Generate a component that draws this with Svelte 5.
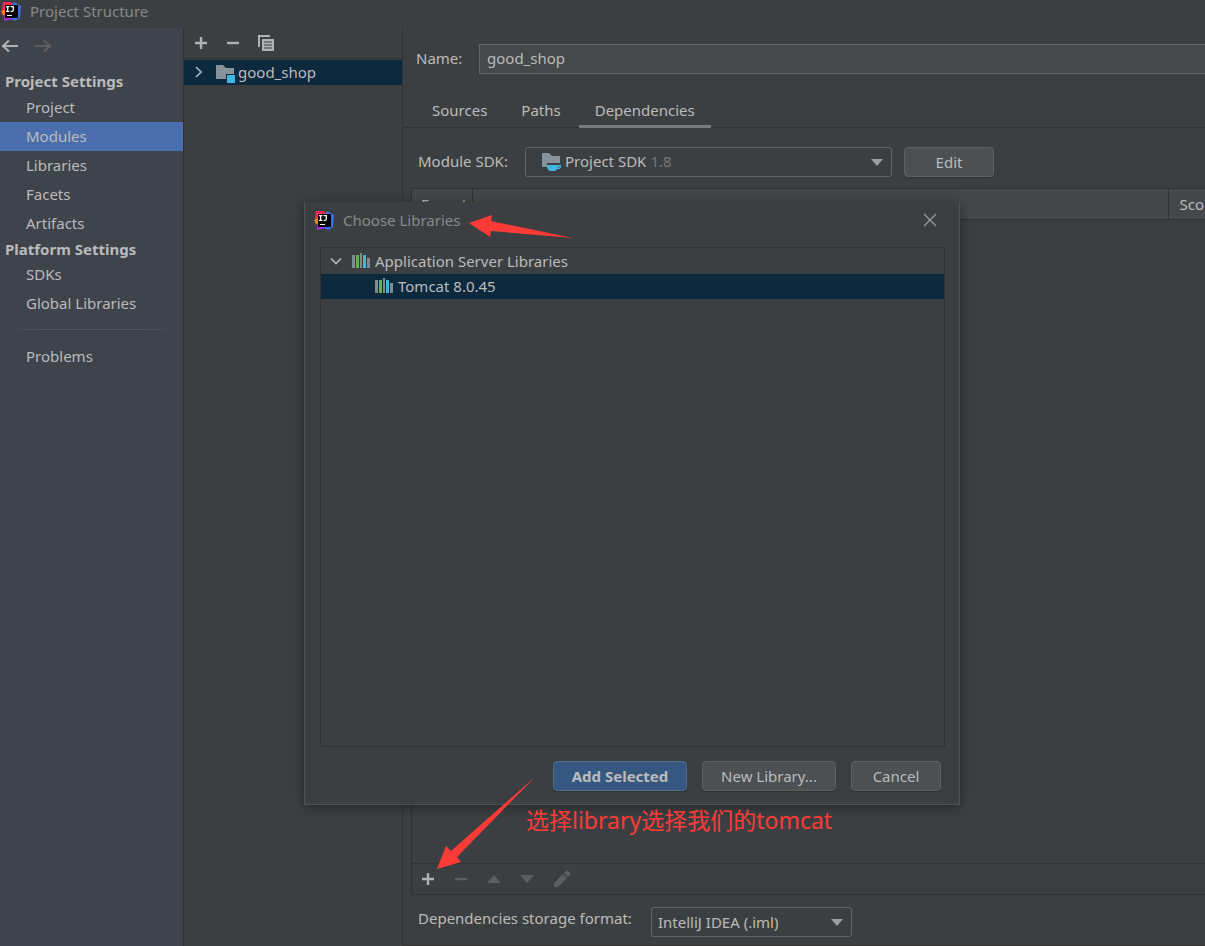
<script lang="ts">
	const projectItems = ['Project', 'Modules', 'Libraries', 'Facets', 'Artifacts'];
	const platformItems = ['SDKs', 'Global Libraries'];
	const tabs = ['Sources', 'Paths', 'Dependencies'];

	let current = $state('Modules');
	let activeTab = $state('Dependencies');
	let moduleName = $state('good_shop');
	let expanded = $state(true);
	let showDialog = $state(true);
</script>

{#snippet logo()}
	<svg class="logo" width="20" height="20" viewBox="0 0 20 20" aria-hidden="true">
		<path d="M2 1L10 1 13 5 6 14 1 9z" fill="#fe2857" />
		<path d="M0 10L5 8l1 7-4-1z" fill="#fc801d" />
		<path d="M3 14l7-2 3 6-5 1-5 1z" fill="#a12fd0" />
		<path d="M11 4l2-3 7 4-1 12-5 3-6-3z" fill="#3b6fe8" />
		<rect x="4" y="4" width="13" height="13" fill="#000" />
		<path d="M5 5.7h3.4M6.7 5.7v4.6M5 10.3h3.4M9.5 5.7h2.8v3.3q0 1.3-1.3 1.3H9.6" fill="none" stroke="#fff" stroke-width="1.3" />
		<rect x="6" y="14" width="5" height="1" fill="#fff" />
	</svg>
{/snippet}

{#snippet plus()}
	<svg width="14" height="14" viewBox="0 0 14 14" aria-hidden="true">
		<path d="M7 1v12M1 7h12" stroke="currentColor" stroke-width="2.4" />
	</svg>
{/snippet}

{#snippet minus()}
	<svg width="14" height="14" viewBox="0 0 14 14" aria-hidden="true">
		<path d="M1 7h12" stroke="currentColor" stroke-width="2.4" />
	</svg>
{/snippet}

{#snippet books()}
	<svg width="18" height="16" viewBox="0 0 18 16" aria-hidden="true">
		<path d="M0 2h3v13H0zM8 0h2v15H8zM15 5h3v10h-3z" fill="#7f8b91" />
		<path d="M4 2h3v13H4z" fill="#62b543" />
		<path d="M11 2h3v13h-3z" fill="#40b6e0" />
	</svg>
{/snippet}

{#snippet dropArrow()}
	<svg class="drop" width="12" height="7" viewBox="0 0 12 7" aria-hidden="true">
		<path d="M0 0h12L6 7z" fill="#9a9da0" />
	</svg>
{/snippet}

<div class="window">
	<header class="titlebar">
		{@render logo()}
		<span>Project Structure</span>
	</header>

	<div class="body">
		<nav class="sidebar">
			<div class="history">
				<button type="button" aria-label="Back">
					<svg width="18" height="14" viewBox="0 0 18 14" aria-hidden="true">
						<path d="M17 7H2M8 1.5L2 7l6 5.5" fill="none" stroke="currentColor" stroke-width="2.2" />
					</svg>
				</button>
				<button type="button" aria-label="Forward" disabled>
					<svg width="18" height="14" viewBox="0 0 18 14" aria-hidden="true">
						<path d="M1 7h15M10 1.5L16 7l-6 5.5" fill="none" stroke="currentColor" stroke-width="2.2" />
					</svg>
				</button>
			</div>

			<h2>Project Settings</h2>
			{#each projectItems as item}
				<button type="button" class="nav-item" class:selected={current === item} onclick={() => (current = item)}>
					{item}
				</button>
			{/each}
			<h2>Platform Settings</h2>
			{#each platformItems as item}
				<button type="button" class="nav-item" class:selected={current === item} onclick={() => (current = item)}>
					{item}
				</button>
			{/each}
			<hr />
			<button type="button" class="nav-item" class:selected={current === 'Problems'} onclick={() => (current = 'Problems')}>
				Problems
			</button>
		</nav>

		<section class="modules">
			<div class="module-tools">
				<button type="button" aria-label="Add">{@render plus()}</button>
				<button type="button" aria-label="Remove">{@render minus()}</button>
				<button type="button" aria-label="Copy">
					<svg width="16" height="16" viewBox="0 0 16 16" aria-hidden="true">
						<path d="M0 0h12v2H2v10H0z" fill="currentColor" />
						<path d="M4 4h12v12H4z" fill="currentColor" />
						<path d="M6 7h8M6 10h8M6 13h8" stroke="#3c3f41" stroke-width="1" />
					</svg>
				</button>
			</div>
			<button type="button" class="module-row">
				<svg width="8" height="12" viewBox="0 0 8 12" aria-hidden="true">
					<path d="M1 1l5 5-5 5" fill="none" stroke="#b0b3b5" stroke-width="1.7" />
				</svg>
				<svg class="folder" width="19" height="18" viewBox="0 0 19 18" aria-hidden="true">
					<path d="M0 0h7l3 3h8v6h-8v5H0z" fill="#87939a" />
					<path d="M11 10h8v8h-8z" fill="#40b6e0" />
				</svg>
				<span>{moduleName}</span>
			</button>
		</section>

		<main class="editor">
			<div class="name-row">
				<label for="module-name">Name:</label>
				<input id="module-name" type="text" bind:value={moduleName} />
			</div>

			<div class="tabs" role="tablist">
				{#each tabs as tab}
					<button
						type="button"
						role="tab"
						aria-selected={activeTab === tab}
						class:active={activeTab === tab}
						onclick={() => (activeTab = tab)}
					>
						{tab}
					</button>
				{/each}
			</div>

			<div class="sdk-row">
				<label for="module-sdk">Module SDK:</label>
				<div class="combo sdk">
					<svg width="20" height="18" viewBox="0 0 20 18" aria-hidden="true">
						<path d="M0 0h7l3 3h8v7H5v4H0z" fill="#87939a" />
						<path d="M5 12h11v1q0 4-3 5H8q-3-1-3-5z" fill="#40b6e0" />
						<path d="M15 12.7h3.3v1.6l-1 1H15" fill="none" stroke="#40b6e0" stroke-width="1.4" />
					</svg>
					<select id="module-sdk">
						<option>Project SDK</option>
					</select>
					<span class="hint">1.8</span>
					{@render dropArrow()}
				</div>
				<button type="button" class="btn">Edit</button>
			</div>

			<div class="deps">
				<table>
					<thead>
						<tr>
							<th class="col-export">Export</th>
							<th></th>
							<th class="col-scope">Scope</th>
						</tr>
					</thead>
				</table>
				<div class="deps-tools">
					<button type="button" aria-label="Add dependency">{@render plus()}</button>
					<button type="button" aria-label="Remove dependency" disabled>{@render minus()}</button>
					<button type="button" aria-label="Move up" disabled>
						<svg width="14" height="8" viewBox="0 0 14 8" aria-hidden="true"><path d="M0 8h14L7 0z" fill="currentColor" /></svg>
					</button>
					<button type="button" aria-label="Move down" disabled>
						<svg width="14" height="8" viewBox="0 0 14 8" aria-hidden="true"><path d="M0 0h14L7 8z" fill="currentColor" /></svg>
					</button>
					<button type="button" aria-label="Edit dependency" disabled>
						<svg width="18" height="18" viewBox="0 0 18 18" aria-hidden="true">
							<path d="M1 17v-4L10 4l4 4-9 9zM11 3l2-2q1-1 2 0l2 2q1 1 0 2l-2 2z" fill="currentColor" />
						</svg>
					</button>
				</div>
			</div>

			<div class="format-row">
				<label for="storage-format">Dependencies storage format:</label>
				<div class="combo format">
					<select id="storage-format">
						<option>IntelliJ IDEA (.iml)</option>
					</select>
					{@render dropArrow()}
				</div>
			</div>
		</main>
	</div>

	{#if showDialog}
		<div class="dialog" role="dialog" aria-labelledby="dialog-title">
			<div class="dialog-title">
				{@render logo()}
				<span id="dialog-title">Choose Libraries</span>
				<button type="button" aria-label="Close" onclick={() => (showDialog = false)}>
					<svg width="14" height="14" viewBox="0 0 14 14" aria-hidden="true">
						<path d="M1 1l12 12M13 1L1 13" stroke="currentColor" stroke-width="1.2" />
					</svg>
				</button>
			</div>
			<div class="library-list">
				<button type="button" class="lib-row" aria-expanded={expanded} onclick={() => (expanded = !expanded)}>
					<svg class="chevron" width="12" height="8" viewBox="0 0 12 8" aria-hidden="true">
						<path d="M1 1.5l5 5 5-5" fill="none" stroke="#b0b3b5" stroke-width="1.7" />
					</svg>
					{@render books()}
					<span>Application Server Libraries</span>
				</button>
				{#if expanded}
					<button type="button" class="lib-row child">
						{@render books()}
						<span>Tomcat 8.0.45</span>
					</button>
				{/if}
			</div>
			<div class="dialog-actions">
				<button type="button" class="btn wide primary">Add Selected</button>
				<button type="button" class="btn wide">New Library...</button>
				<button type="button" class="btn" onclick={() => (showDialog = false)}>Cancel</button>
			</div>
		</div>
	{/if}

	<svg class="arrow to-title" width="104" height="24" viewBox="0 0 104 24" aria-hidden="true">
		<path d="M0 8L23 0l-1 6 82 17-82-7-1 6z" fill="#ff3b38" />
	</svg>
	<svg class="arrow to-add" width="98" height="92" viewBox="0 0 98 92" aria-hidden="true">
		<path d="M0 92L9 69l5 5L98 0 20 80l4 5z" fill="#ff3b38" />
	</svg>
	<p class="note">选择library选择我们的tomcat</p>
</div>

<style>
	:global(body) {
		background: #3c3f41;
	}

	.window {
		position: relative;
		display: flex;
		flex-direction: column;
		min-height: 100vh;
		overflow: hidden;
		background: #3c3f41;
		color: #bbbbbb;
		font-family: 'Noto Sans', 'Noto Sans CJK SC', sans-serif;
		font-size: 15px;
		line-height: 20px;
	}

	button,
	input,
	select {
		margin: 0;
		padding: 0;
		border: 0;
		background: none;
		color: inherit;
		font: inherit;
		text-align: left;
	}

	button:disabled {
		color: #5c5e60;
	}

	svg {
		display: block;
		flex: none;
	}

	.titlebar {
		display: flex;
		align-items: center;
		gap: 9px;
		height: 28px;
		padding: 0 1px 6px;
		box-sizing: border-box;
		color: #87898a;
	}

	.body {
		display: flex;
		flex: 1;
	}

	/* left navigation */
	.sidebar {
		flex: none;
		width: 183px;
		border-right: 1px solid #323232;
		background: #3e434c;
	}

	.history {
		display: flex;
		gap: 15px;
		height: 36px;
		padding: 0 1px;
		align-items: center;
	}

	h2 {
		margin: 0;
		padding: 0 5px;
		font-size: 15px;
		line-height: 22px;
	}

	.history + h2 {
		padding-top: 6px;
		padding-bottom: 1px;
	}

	.nav-item {
		display: block;
		width: 100%;
		padding: 4px 26px 5px;
	}

	.nav-item.selected {
		background: #4b6eaf;
	}

	hr {
		height: 1px;
		margin: 11px 4px 12px;
		border: 0;
		background: linear-gradient(90deg, transparent, #53565e 20%, #53565e 80%, transparent);
	}

	/* module tree */
	.modules {
		flex: none;
		width: 218px;
		border-right: 1px solid #323232;
	}

	.module-tools {
		display: flex;
		align-items: center;
		gap: 18px;
		height: 30px;
		padding: 0 10px;
		border-bottom: 1px solid #323232;
		margin-bottom: 1px;
	}

	.module-tools,
	.history,
	.deps-tools {
		color: #afb1b3;
	}

	.module-row {
		display: flex;
		align-items: center;
		width: 100%;
		height: 25px;
		padding: 0 0 2px 11px;
		background: #0d293e;
	}

	.folder {
		margin: 4px 3px 0 13px;
	}

	/* module editor */
	.editor {
		display: flex;
		flex: 1;
		flex-direction: column;
		min-width: 0;
		border-bottom: 1px solid #323232;
		box-sizing: border-box;
	}

	.name-row {
		display: flex;
		align-items: center;
		margin-top: 16px;
		padding-left: 13px;
	}

	.name-row label {
		width: 63px;
		padding-bottom: 2px;
	}

	.name-row input {
		flex: 1;
		height: 30px;
		padding: 0 7px 2px;
		box-sizing: border-box;
		border: 1px solid #646464;
		border-right: 0;
		background: #45494a;
	}

	.tabs {
		display: flex;
		gap: 2px;
		margin-top: 19px;
		padding-left: 13px;
		border-bottom: 1px solid #323232;
	}

	.tabs button {
		padding: 7px 16px 5px;
		border-bottom: 3px solid transparent;
		margin-bottom: -1px;
	}

	.tabs button.active {
		border-color: #747a80;
	}

	.sdk-row {
		display: flex;
		align-items: center;
		margin-top: 19px;
		padding-left: 15px;
	}

	.sdk-row label {
		width: 107px;
		padding-bottom: 2px;
	}

	.combo {
		display: flex;
		align-items: center;
		height: 30px;
		box-sizing: border-box;
		border: 1px solid #646464;
		border-radius: 3px;
	}

	.combo select {
		appearance: none;
		field-sizing: content;
		outline: 0;
	}

	.combo .drop {
		margin-left: auto;
		margin-right: 8px;
	}

	.sdk {
		width: 367px;
		padding-left: 16px;
		margin-right: 12px;
	}

	.sdk select {
		margin: 0 4px 0 3px;
	}

	.sdk select,
	.hint {
		padding-bottom: 2px;
	}

	.hint {
		color: #777777;
	}

	.btn {
		min-width: 90px;
		height: 30px;
		box-sizing: border-box;
		border: 1px solid #5e6060;
		border-radius: 4px;
		background: #4c5052;
		box-shadow: 0 1px 1px rgba(0, 0, 0, 0.2);
		text-align: center;
	}

	.btn.wide {
		min-width: 134px;
	}

	.btn.primary {
		border-color: #4c708c;
		background: #365880;
		font-weight: bold;
	}

	.deps {
		display: flex;
		flex: 1;
		flex-direction: column;
		margin: 11px 0 12px 8px;
		border: 1px solid #323232;
		border-right: 0;
		overflow: hidden;
	}

	table {
		width: 100%;
		table-layout: fixed;
		border-collapse: collapse;
		background: #45484a;
	}

	th {
		height: 30px;
		padding: 0 0 0 11px;
		box-sizing: border-box;
		border-right: 1px solid #323232;
		border-bottom: 1px solid #323232;
		font-weight: normal;
		text-align: left;
		white-space: nowrap;
	}

	.col-export {
		width: 60px;
		padding-left: 9px;
	}

	.col-scope {
		width: 37px;
		border-right: 0;
	}

	.deps-tools {
		display: flex;
		align-items: center;
		gap: 19px;
		height: 30px;
		margin-top: auto;
		padding-left: 9px;
		border-top: 1px solid #323232;
	}

	.format-row {
		display: flex;
		align-items: center;
		margin-bottom: 8px;
		padding-left: 15px;
	}

	.format-row label {
		width: 233px;
		padding-bottom: 8px;
	}

	.format {
		width: 201px;
		padding-left: 6px;
	}

	/* library chooser */
	.dialog {
		position: absolute;
		top: 202px;
		left: 304px;
		display: flex;
		flex-direction: column;
		width: 656px;
		height: 603px;
		padding: 0 14px 13px 15px;
		box-sizing: border-box;
		border: 1px solid #4f5254;
		border-top-color: #3c3f41;
		background: #3c3f41;
		box-shadow: 0 2px 12px rgba(0, 0, 0, 0.4);
	}

	.dialog-title {
		display: flex;
		align-items: center;
		gap: 9px;
		height: 44px;
		padding-bottom: 11px;
		margin-left: -6px;
		box-sizing: border-box;
		color: #87898a;
	}

	.dialog-title button {
		margin-left: auto;
		margin-right: 8px;
		color: #9a9da0;
	}

	.library-list {
		flex: 1;
		padding-top: 1px;
		border: 1px solid #323232;
	}

	.lib-row {
		display: flex;
		align-items: center;
		gap: 5px;
		width: 100%;
		height: 25px;
		padding: 0 0 1px 9px;
	}

	.lib-row .chevron {
		margin-right: 5px;
	}

	.lib-row.child {
		padding-left: 54px;
		background: #0d293e;
	}

	.dialog-actions {
		display: flex;
		justify-content: flex-end;
		gap: 15px;
		margin-top: 14px;
		padding-right: 4px;
	}

	/* red marks over the window */
	.arrow {
		position: absolute;
		pointer-events: none;
	}

	.to-title {
		top: 215px;
		left: 469px;
	}

	.to-add {
		top: 777px;
		left: 437px;
	}

	.note {
		position: absolute;
		top: 803px;
		left: 526px;
		margin: 0;
		color: #ff3b38;
		font-size: 23px;
		line-height: 34px;
		white-space: nowrap;
	}
</style>
